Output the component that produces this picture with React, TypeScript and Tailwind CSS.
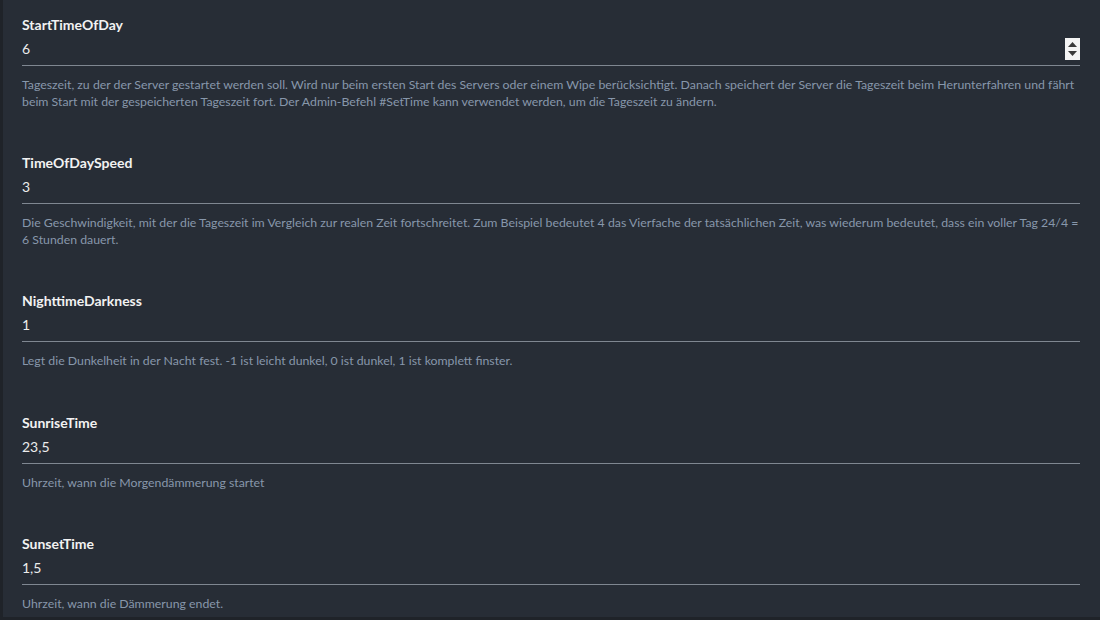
const settings = [
  {
    name: 'StartTimeOfDay',
    value: '6',
    spinner: true,
    desc: 'Tageszeit, zu der der Server gestartet werden soll. Wird nur beim ersten Start des Servers oder einem Wipe berücksichtigt. Danach speichert der Server die Tageszeit beim Herunterfahren und fährt beim Start mit der gespeicherten Tageszeit fort. Der Admin-Befehl #SetTime kann verwendet werden, um die Tageszeit zu ändern.',
  },
  {
    name: 'TimeOfDaySpeed',
    value: '3',
    desc: 'Die Geschwindigkeit, mit der die Tageszeit im Vergleich zur realen Zeit fortschreitet. Zum Beispiel bedeutet 4 das Vierfache der tatsächlichen Zeit, was wiederum bedeutet, dass ein voller Tag 24/4 = 6 Stunden dauert.',
  },
  {
    name: 'NighttimeDarkness',
    value: '1',
    desc: 'Legt die Dunkelheit in der Nacht fest. -1 ist leicht dunkel, 0 ist dunkel, 1 ist komplett finster.',
  },
  {
    name: 'SunriseTime',
    value: '23,5',
    desc: 'Uhrzeit, wann die Morgendämmerung startet',
  },
  {
    name: 'SunsetTime',
    value: '1,5',
    desc: 'Uhrzeit, wann die Dämmerung endet.',
  },
];

function Spinner() {
  return (
    <div className="absolute right-0 top-[4px] w-[15px] h-[22px] bg-[#f4f4f4] flex flex-col items-center justify-center gap-[4px]">
      <svg width="9" height="5" viewBox="0 0 9 5">
        <path d="M4.5 0 L9 5 L0 5 Z" fill="#3a3a3a" />
      </svg>
      <svg width="9" height="5" viewBox="0 0 9 5">
        <path d="M0 0 L9 0 L4.5 5 Z" fill="#3a3a3a" />
      </svg>
    </div>
  );
}

function App() {
  return (
    <div
      className="w-[1100px] h-[620px] bg-[#1f2329] overflow-hidden flex"
      style={{ fontFamily: '"Lato", "Open Sans", sans-serif' }}
    >
      <div className="ml-[3px] w-[1097px] h-[617px] bg-[#272d36] pl-[19px] pr-[20px] pt-[16px] overflow-hidden">
        {settings.map((s) => (
          <div key={s.name} className="mb-[44px]">
            <div className="text-[14px] leading-[18px] font-bold text-[#f2f2f2]">{s.name}</div>
            <div className="relative h-[32px] border-b border-[#7f8791] flex items-center pb-[2px]">
              <span className="text-[14px] text-[#ececec]">{s.value}</span>
              {s.spinner && <Spinner />}
            </div>
            <p className="mt-[11px] text-[12.3px] leading-[16.5px] text-[#8797ab]">{s.desc}</p>
          </div>
        ))}
      </div>
    </div>
  );
}

export default App;
